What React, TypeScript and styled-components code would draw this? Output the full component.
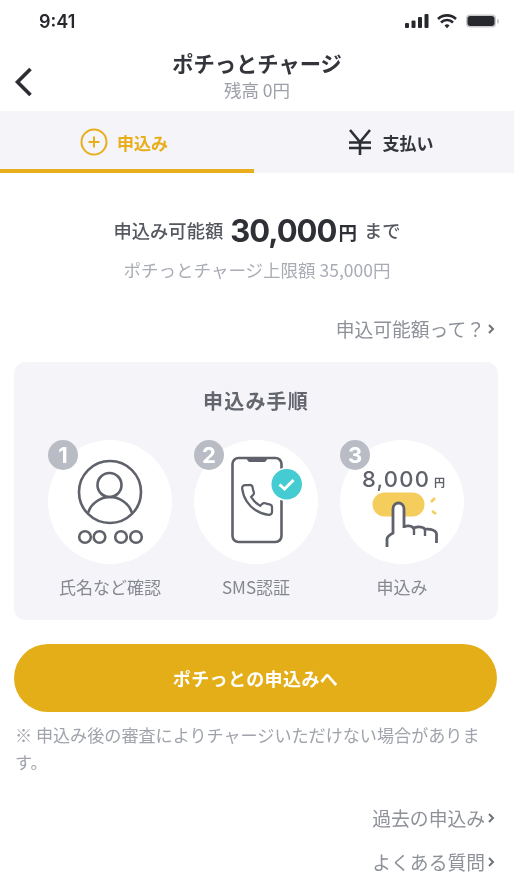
import React from "react";
import styled, { createGlobalStyle } from "styled-components";

const Global = createGlobalStyle`
  html, body { margin: 0; padding: 0; background: #fff; }
  body { font-family: "Noto Sans CJK JP", "Inter", sans-serif; color: #33353b; }
`;

const Page = styled.div`
  width: 514px;
  height: 890px;
  overflow: hidden;
  display: flex;
  flex-direction: column;
  filter: blur(0.6px);
`;

const StatusBar = styled.div`
  height: 42px;
  flex: none;
  display: flex;
  align-items: center;
  justify-content: space-between;
  padding: 0 13px 0 39px;
  font-family: "Inter", sans-serif;
  font-size: 18px;
  font-weight: 600;
  color: #26282d;
`;

const StatusIcons = styled.svg`
  width: 96px;
  height: 16px;
  display: block;
`;

const Header = styled.header`
  height: 69px;
  flex: none;
  display: flex;
  flex-direction: column;
  align-items: center;
  position: relative;
  padding-top: 6px;
  box-sizing: border-box;
`;

const BackIcon = styled.svg`
  position: absolute;
  left: 14px;
  top: 24px;
  width: 20px;
  height: 32px;
`;

const Title = styled.div`
  font-size: 21.3px;
  font-weight: 700;
  line-height: 30px;
  color: #33353b;
`;

const Subtitle = styled.div`
  font-size: 17.5px;
  line-height: 23px;
  color: #9da0a8;
`;

const Tabs = styled.nav`
  height: 62px;
  flex: none;
  display: grid;
  grid-template-columns: 254px 1fr;
  background: #f4f4f9;
`;

const Tab = styled.div<{ $active?: boolean }>`
  display: flex;
  align-items: center;
  justify-content: center;
  gap: ${(p) => (p.$active ? "9px" : "11px")};
  padding: ${(p) => (p.$active ? "0 6px 0 0" : "0 0 0 13px")};
  font-size: 17px;
  font-weight: 700;
  color: ${(p) => (p.$active ? "#e8ae1b" : "#33353b")};
  box-shadow: ${(p) => (p.$active ? "inset 0 -4px 0 #e8ae1b" : "none")};
`;

const Amount = styled.div`
  margin-top: 31px;
  height: 52px;
  display: flex;
  align-items: center;
  justify-content: center;
  font-size: 18.3px;
  font-weight: 500;
  color: #55585f;
`;

const AmountValue = styled.span`
  font-family: "Inter", sans-serif;
  font-size: 31px;
  font-weight: 700;
  letter-spacing: -1px;
  color: #2e3036;
  margin-left: 7px;
`;

const AmountYen = styled.span`
  font-size: 18.5px;
  font-weight: 700;
  color: #2e3036;
  margin: 4px 7px 0 2px;
`;

const Limit = styled.div`
  margin-top: 1px;
  text-align: center;
  font-size: 17.5px;
  line-height: 26px;
  color: #a9acb4;
`;

const LinkRow = styled.div<{ $top: number }>`
  margin-top: ${(p) => p.$top}px;
  padding-right: 19px;
  display: flex;
  justify-content: flex-end;
  align-items: center;
  gap: 2px;
  font-size: 18.8px;
  line-height: 26px;
  color: #8e9198;
`;

const Chevron = styled.svg`
  width: 8px;
  height: 12px;
`;

const Card = styled.section`
  margin: 20px 16px 0 14px;
  height: 258px;
  flex: none;
  border-radius: 12px;
  background: #f4f4f9;
  display: flex;
  flex-direction: column;
  align-items: center;
  box-sizing: border-box;
  padding-top: 24px;
`;

const CardTitle = styled.h2`
  margin: 0;
  font-size: 20px;
  font-weight: 700;
  line-height: 30px;
  letter-spacing: 1.2px;
  color: #63666d;
`;

const Steps = styled.div`
  margin-top: 24px;
  display: grid;
  grid-template-columns: repeat(3, 124px);
  column-gap: 22px;
`;

const Step = styled.div`
  display: flex;
  flex-direction: column;
  align-items: center;
`;

const Circle = styled.div`
  position: relative;
  width: 124px;
  height: 124px;
  border-radius: 50%;
  background: #fff;
`;

const Badge = styled.div`
  position: absolute;
  left: 0;
  top: 0;
  width: 30px;
  height: 30px;
  border-radius: 50%;
  background: #b9bcc4;
  color: #fff;
  font-family: "Inter", sans-serif;
  font-size: 22px;
  font-weight: 700;
  line-height: 30px;
  text-align: center;
`;

const Art = styled.svg`
  display: block;
  width: 124px;
  height: 124px;
`;

const StepLabel = styled.div`
  margin-top: 10px;
  font-size: 17px;
  line-height: 26px;
  color: #85888f;
`;

const PrimaryButton = styled.button`
  margin: 24px 17px 0 14px;
  height: 68px;
  flex: none;
  border: 0;
  border-radius: 34px;
  background: #e4ae18;
  color: #fff;
  font-family: inherit;
  font-size: 18px;
  font-weight: 700;
  letter-spacing: 0.4px;
`;

const Note = styled.p`
  margin: 9px 30px 0 15px;
  font-size: 17.1px;
  line-height: 27px;
  color: #a0a3ab;
`;

const ChevronMark = () => (
  <Chevron viewBox="0 0 8 12">
    <path d="M2 2l4 4-4 4" fill="none" stroke="#6f7279" strokeWidth="2" />
  </Chevron>
);

const Ink = "#5f626a";

export default function App() {
  return (
    <Page>
      <Global />
      <StatusBar>
        <span>9:41</span>
        <StatusIcons viewBox="0 0 96 16">
          <rect x="0" y="10" width="4" height="5" rx="1" fill="#26282d" />
          <rect x="6.5" y="7.5" width="4" height="7.5" rx="1" fill="#26282d" />
          <rect x="13" y="4" width="4" height="11" rx="1" fill="#26282d" />
          <rect x="19.5" y="1" width="4" height="14" rx="1" fill="#26282d" />
          <path d="M33 6a13 13 0 0 1 18 0M36 9.5a8.5 8.5 0 0 1 12 0" fill="none" stroke="#26282d" strokeWidth="2.6" />
          <path d="M39.5 12.5a3.6 3.6 0 0 1 5 0L42 15.2z" fill="#26282d" />
          <rect x="61" y="1.5" width="30" height="13" rx="4" fill="#c9cacd" />
          <rect x="62.5" y="3" width="27" height="10" rx="3" fill="#26282d" />
          <rect x="92" y="6" width="2" height="4.5" rx="1" fill="#c9cacd" />
        </StatusIcons>
      </StatusBar>
      <Header>
        <BackIcon viewBox="0 0 20 32">
          <path d="M16.5 3L3.5 16l13 13" fill="none" stroke="#2c2e33" strokeWidth="3.6" />
        </BackIcon>
        <Title>ポチっとチャージ</Title>
        <Subtitle>残高 0円</Subtitle>
      </Header>
      <Tabs>
        <Tab $active>
          <svg width="28" height="28" viewBox="0 0 28 28">
            <circle cx="14" cy="14" r="12.5" fill="none" stroke="#e8ae1b" strokeWidth="2" />
            <path d="M14 8.500v11M8.500 14h11" stroke="#e8ae1b" strokeWidth="2" />
          </svg>
          <span>申込み</span>
        </Tab>
        <Tab>
          <svg width="24" height="26" viewBox="0 0 24 26">
            <path d="M2 1l10 12L22 1M12 13v13M1 13.500h22M1 19h22" fill="none" stroke="#2c2e33" strokeWidth="2.6" />
          </svg>
          <span>支払い</span>
        </Tab>
      </Tabs>
      <Amount>
        <span>申込み可能額</span>
        <AmountValue>30,000</AmountValue>
        <AmountYen>円</AmountYen>
        <span>まで</span>
      </Amount>
      <Limit>ポチっとチャージ上限額 35,000円</Limit>
      <LinkRow $top={33}>
        申込可能額って？
        <ChevronMark />
      </LinkRow>
      <Card>
        <CardTitle>申込み手順</CardTitle>
        <Steps>
          <Step>
            <Circle>
              <Art viewBox="0 0 124 124" fill="none" stroke={Ink} strokeWidth="2.6">
                <circle cx="62" cy="52" r="31" />
                <circle cx="61.5" cy="45" r="12" />
                <path d="M40 73c3-10 13-16 22-16s19 6 22 16" />
                <circle cx="37" cy="97" r="5.800" />
                <circle cx="51.500" cy="97" r="5.800" />
                <circle cx="73" cy="97" r="5.800" />
                <circle cx="88" cy="97" r="5.800" />
              </Art>
              <Badge>1</Badge>
            </Circle>
            <StepLabel>氏名など確認</StepLabel>
          </Step>
          <Step>
            <Circle>
              <Art viewBox="0 0 124 124" fill="none" stroke={Ink} strokeWidth="2.6">
                <rect x="38.500" y="18" width="49" height="84" rx="6" />
                <path d="M52 18h22l-2 3a2 2 0 0 1-2 1H56a2 2 0 0 1-2-1z" fill={Ink} stroke="none" />
                <g transform="translate(45 42) scale(1.5)" strokeWidth="1.500">
                  <path d="M22 16.920v3a2 2 0 0 1-2.180 2 19.790 19.790 0 0 1-8.630-3.070 19.500 19.500 0 0 1-6-6 19.790 19.790 0 0 1-3.070-8.670A2 2 0 0 1 4.110 2h3a2 2 0 0 1 2 1.720 12.840 12.840 0 0 0 .7 2.810 2 2 0 0 1-.45 2.110L8.090 9.910a16 16 0 0 0 6 6l1.270-1.270a2 2 0 0 1 2.110-.45 12.840 12.840 0 0 0 2.810.7A2 2 0 0 1 22 16.920z" />
                </g>
                <circle cx="92.700" cy="44.300" r="16" fill="#45cbd2" stroke="#fff" strokeWidth="1.5" />
                <path d="M85.500 44.500l5 4.500 9-9" stroke="#fff" strokeWidth="3" />
              </Art>
              <Badge>2</Badge>
            </Circle>
            <StepLabel>SMS認証</StepLabel>
          </Step>
          <Step>
            <Circle>
              <Art viewBox="0 0 124 124" fill="none">
                <text x="22" y="46.500" fontSize="22" fontWeight="500" letterSpacing="1.2" fill={Ink} fontFamily="Inter, sans-serif">8,000</text>
                <text x="94" y="46.500" fontSize="11" fontWeight="700" fill={Ink} fontFamily="'Noto Sans CJK JP', sans-serif">円</text>
                <rect x="32.500" y="52.500" width="52" height="24" rx="12" fill="#f5cd5d" />
                <path d="M91 62l4-4M92 71l4 3" stroke="#f5cd5d" strokeWidth="2.600" />
                <path
                  d="M47 107v-8c0-3 3-4 6-6V69c0-8 11-8 11 0v19c0-3 9-3 9.500 1 0-3 11-3 11.500 1 0-2 11-1 11.500 4v9"
                  fill="#fff"
                  stroke={Ink}
                  strokeWidth="2.800"
                />
                <path d="M74 89v6M85 90v6" stroke={Ink} strokeWidth="2.400" />
              </Art>
              <Badge>3</Badge>
            </Circle>
            <StepLabel>申込み</StepLabel>
          </Step>
        </Steps>
      </Card>
      <PrimaryButton>ポチっとの申込みへ</PrimaryButton>
      <Note>※ 申込み後の審査によりチャージいただけない場合があります。</Note>
      <LinkRow $top={30}>
        過去の申込み
        <ChevronMark />
      </LinkRow>
      <LinkRow $top={18}>
        よくある質問
        <ChevronMark />
      </LinkRow>
    </Page>
  );
}
